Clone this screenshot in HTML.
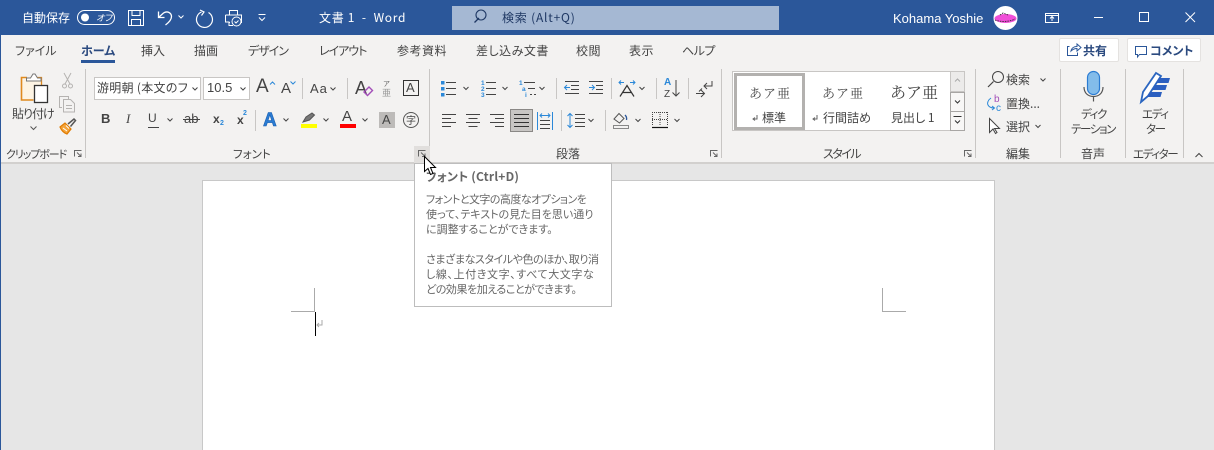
<!DOCTYPE html>
<html lang="ja"><head><meta charset="utf-8"><title>文書 1 - Word</title>
<style>
html,body{margin:0;padding:0;width:1214px;height:450px;overflow:hidden;background:#e6e6e6}
body{position:relative;font-family:"Liberation Sans","Noto Sans CJK JP",sans-serif;font-size:12px;color:#444}
div{position:absolute;box-sizing:border-box}
.t{white-space:nowrap;line-height:16px;height:16px;font-family:"Noto Sans CJK JP","Liberation Sans",sans-serif;font-feature-settings:"palt";color:#444}
.w{color:#fff}
.s{background:#c8c6c4;width:1px}
.n{font-size:11.5px;letter-spacing:-1.400px}
svg{position:absolute;left:0;top:0}
</style></head><body>
<div style="left:0;top:0;width:1214px;height:35px;background:#2b579a"></div>
<div style="left:0;top:35px;width:1214px;height:127px;background:#f3f2f1"></div>
<div style="left:0;top:162px;width:1214px;height:2px;background:#d2d0ce"></div>
<div style="left:0;top:35px;width:1px;height:415px;background:#2b579a"></div>
<div style="left:202px;top:180px;width:793px;height:280px;background:#fff;border:1px solid #c8c8c8"></div>

<!-- title bar -->
<div class="t w" style="left:22px;top:10px">自動保存</div>
<div class="t w" style="left:96px;top:10px;font-size:9px;font-style:italic">オフ</div>
<div class="t w" style="left:319px;top:10px;letter-spacing:.7px">文書 1&nbsp; -&nbsp; Word</div>
<div style="left:452px;top:6px;width:327px;height:24px;background:#a5b8d3"></div>
<div class="t" style="left:502px;top:10px;color:#1f3864;letter-spacing:.8px">検索 (Alt+Q)</div>
<div class="t w" style="left:893px;top:11px;font-family:'Liberation Sans',sans-serif;font-size:13px">Kohama Yoshie</div>

<!-- tabs -->
<div class="t" style="left:15px;top:43px">ファイル</div>
<div class="t" style="left:81px;top:43px;font-weight:700;color:#2b4a7f">ホーム</div>
<div style="left:81px;top:60px;width:34px;height:3px;background:#2b579a"></div>
<div class="t" style="left:141px;top:43px">挿入</div>
<div class="t" style="left:194px;top:43px">描画</div>
<div class="t" style="left:248px;top:43px;letter-spacing:-1px">デザイン</div>
<div class="t" style="left:319px;top:43px;letter-spacing:-1px">レイアウト</div>
<div class="t" style="left:397px;top:43px;letter-spacing:.5px">参考資料</div>
<div class="t" style="left:476px;top:43px;letter-spacing:.5px">差し込み文書</div>
<div class="t" style="left:576px;top:43px;letter-spacing:.5px">校閲</div>
<div class="t" style="left:629px;top:43px;letter-spacing:.5px">表示</div>
<div class="t" style="left:682px;top:43px;letter-spacing:-.5px">ヘルプ</div>
<div style="left:1059px;top:38px;width:60px;height:24px;background:#fff;border:1px solid #e4e2e0;border-radius:2px"></div>
<div style="left:1127px;top:38px;width:74px;height:24px;background:#fff;border:1px solid #e4e2e0;border-radius:2px"></div>
<div class="t" style="left:1083px;top:43px;font-weight:700;color:#2b4a7f">共有</div>
<div class="t" style="left:1150px;top:43px;font-weight:700;color:#2b4a7f">コメント</div>

<!-- separators -->
<div class="s" style="left:85px;top:69px;height:89px"></div>
<div class="s" style="left:429px;top:69px;height:77px"></div>
<div class="s" style="left:721px;top:69px;height:89px"></div>
<div class="s" style="left:975px;top:69px;height:89px"></div>
<div class="s" style="left:1060px;top:69px;height:89px"></div>
<div class="s" style="left:1125px;top:69px;height:89px"></div>
<div class="s" style="left:1183px;top:69px;height:89px"></div>
<div class="s" style="left:302px;top:78px;height:21px"></div>
<div class="s" style="left:347px;top:78px;height:21px"></div>
<div class="s" style="left:255px;top:110px;height:21px"></div>
<div class="s" style="left:556px;top:78px;height:21px"></div>
<div class="s" style="left:611px;top:78px;height:21px"></div>
<div class="s" style="left:656px;top:78px;height:21px"></div>
<div class="s" style="left:688px;top:78px;height:21px"></div>
<div class="s" style="left:561px;top:110px;height:21px"></div>
<div class="s" style="left:605px;top:110px;height:21px"></div>

<!-- clipboard -->
<div class="t" style="left:12px;top:106px;letter-spacing:-1px">貼り付け</div>
<div class="t" style="left:6px;top:146px;font-size:11px;letter-spacing:-1.100px">クリップボード</div>

<!-- font -->
<div style="left:94px;top:77px;width:107px;height:23px;background:#fff;border:1px solid #c8c6c4"></div>
<div style="left:203px;top:77px;width:47px;height:23px;background:#fff;border:1px solid #c8c6c4"></div>
<div class="t" style="left:97px;top:80px;width:90px;overflow:hidden;letter-spacing:.3px">游明朝 (本文のフォント</div>
<div class="t" style="left:207px;top:80px;font-family:'Liberation Sans';font-size:13px">10.5</div>
<div class="t" style="left:256px;top:79px;font-family:'Liberation Sans';font-size:19px">A</div>
<div class="t" style="left:281px;top:81px;font-family:'Liberation Sans';font-size:15px">A</div>
<div class="t" style="left:310px;top:81px;font-family:'Liberation Sans';font-size:13px;letter-spacing:1px">Aa</div>
<div class="t" style="left:355px;top:80px;font-family:'Liberation Sans';font-size:18px">A</div>
<div class="t" style="left:406px;top:80px;font-family:'Liberation Sans';font-size:13px">A</div>
<div class="t" style="left:101px;top:111px;font-family:'Liberation Sans';font-weight:700;font-size:13px">B</div>
<div class="t" style="left:126px;top:111px;font-family:'Liberation Serif';font-style:italic;font-size:13px">I</div>
<div class="t" style="left:148px;top:110px;font-family:'Liberation Sans';font-size:12px">U</div>
<div class="t" style="left:184px;top:111px;font-family:'Liberation Sans';font-size:13px">ab</div>
<div class="t" style="left:213px;top:111px;font-family:'Liberation Sans';font-weight:700;font-size:12px">x</div>
<div class="t" style="left:220px;top:116px;font-family:'Liberation Sans';font-weight:700;font-size:7px;color:#2b88d8">2</div>
<div class="t" style="left:237px;top:112px;font-family:'Liberation Sans';font-weight:700;font-size:12px">x</div>
<div class="t" style="left:243px;top:106px;font-family:'Liberation Sans';font-weight:700;font-size:7px;color:#2b88d8">2</div>
<div style="left:379px;top:112px;width:16px;height:16px;background:#bdbbb9"></div>
<div class="t" style="left:342px;top:109px;font-family:'Liberation Sans';font-size:15px">A</div>
<div class="t" style="left:382px;top:112px;font-family:'Liberation Sans';font-size:13px">A</div>
<div class="t" style="left:406px;top:112px;font-size:10px">字</div>
<div class="t" style="left:233px;top:146px;font-size:11.5px">フォント</div>

<!-- paragraph -->
<div style="left:510px;top:109px;width:23px;height:23px;background:#c8c6c4;border:1px solid #8a8886"></div>
<div class="t" style="left:556px;top:146px">段落</div>

<!-- styles -->
<div style="left:732px;top:71px;width:219px;height:60px;background:#fff;border:1px solid #c8c6c4"></div>
<div style="left:734px;top:73px;width:71px;height:57px;background:#fff;border:3px solid #b3b1af"></div>
<div class="t" style="left:749px;top:85px;font-family:'Noto Serif CJK SC','Noto Sans CJK JP',serif;font-feature-settings:normal;font-size:13px;letter-spacing:1px">あア亜</div>
<div class="t" style="left:822px;top:85px;font-family:'Noto Serif CJK SC','Noto Sans CJK JP',serif;font-feature-settings:normal;font-size:13px;letter-spacing:1px">あア亜</div>
<div class="t" style="left:890px;top:84px;font-family:'Noto Serif CJK SC','Noto Sans CJK JP',serif;font-feature-settings:normal;font-size:16px">あア亜</div>
<div class="t" style="left:762px;top:110px">標準</div>
<div class="t" style="left:823px;top:110px">行間詰め</div>
<div class="t" style="left:891px;top:110px">見出し 1</div>
<div style="left:950px;top:71px;width:15px;height:21px;background:#ecebea;border:1px solid #c8c6c4"></div>
<div style="left:950px;top:92px;width:15px;height:20px;background:#f8f7f6;border:1px solid #a8a6a4"></div>
<div style="left:950px;top:111px;width:15px;height:20px;background:#f8f7f6;border:1px solid #a8a6a4"></div>
<div class="t" style="left:823px;top:146px;letter-spacing:-1.500px">スタイル</div>

<!-- editing -->
<div class="t" style="left:1006px;top:72px">検索</div>
<div class="t" style="left:1006px;top:96px">置換...</div>
<div class="t" style="left:1006px;top:119px">選択</div>
<div class="t" style="left:1006px;top:146px">編集</div>
<div class="t n" style="left:1081px;top:106px">ディク</div>
<div class="t n" style="left:1071px;top:121px">テーション</div>
<div class="t" style="left:1081px;top:146px">音声</div>
<div class="t n" style="left:1142px;top:106px">エディ</div>
<div class="t n" style="left:1146px;top:121px">ター</div>
<div class="t n" style="left:1133px;top:146px">エディター</div>
<div style="left:414px;top:146px;width:16px;height:17px;background:#e1dfdd"></div>

<svg width="1214" height="450" viewBox="0 0 1214 450" fill="none">
<!-- title bar icons -->
<g stroke="#fff" stroke-width="1">
<rect x="77.5" y="10.5" width="37" height="14" rx="7"/>
<path d="M128.5 10.5h15v15h-15zM132 10.5v5h8v-5M131.500 25.500v-6h9v6"/>
<path d="M158.500 11.500v6h6M158.500 17.500l5-4.500c4-2.500 8 0 8 3.500 0 3-2 5.500-6 8.500" stroke-width="1.300"/>
<path d="M178.500 15.500l2.500 2.500 2.500-2.500"/>
<path d="M208.500 12.500a8 8 0 1 1-7-.5M200 10l4 2-2.500 3.500" stroke-width="1.200"/>
<path d="M229.500 15v-4.500h8v4.500M225.500 15h16v8M225.500 15v7h4M230 22.500h-1v3h4"/>
<circle cx="236.500" cy="21.500" r="4.500" /><path d="M234.500 21.500l1.500 1.500 2.500-2.500"/>
<path d="M258.500 14.500h7M259 17.500l3 3 3-3"/>
<rect x="1045.500" y="13.500" width="13" height="9"/><path d="M1045.500 15.500h13M1052 21v-4M1050 18.500l2-2 2 2"/>
<path d="M1094 17.500h9"/><rect x="1139.500" y="12.500" width="9" height="9"/>
<path d="M1185.500 12.500l9.500 9.500M1195 12.500l-9.500 9.500"/>
</g>
<circle cx="85" cy="17.500" r="4" fill="#fff"/>
<path d="M474.500 22.500l4.500-4.500" stroke="#1f3864" stroke-width="1.300"/><circle cx="481" cy="15" r="5" stroke="#1f3864" stroke-width="1.100"/>
<circle cx="1005.500" cy="18" r="12" fill="#fff"/>
<ellipse cx="1005.500" cy="18.500" rx="11" ry="4.500" fill="#f04fd8"/>
<path d="M995 20c5 2 15 2 20-1M1000 15l3-2 5 2" stroke="#222" stroke-width=".8" stroke-dasharray="1.500 1"/>
<!-- share / comment -->
<path d="M1069.500 46.500h-2v9h10v-3M1071 51c.5-3 3-4.500 6-4.500v-2.500l4 3.500-4 3.500v-2.500c-3 0-4.500 1-6 2.500z" stroke="#2b579a"/>
<path d="M1135.500 46.500h11v8h-7l-2 2.500v-2.500h-2z" stroke="#2b579a"/>
<!-- clipboard -->
<path d="M21.500 77.500h20v22h-20z" fill="#fdf4e4"/>
<path d="M27 77.500h-5.500v22.500h12" stroke="#e08a1e" stroke-width="1.600"/><path d="M36 77.500h5.500v8" stroke="#e08a1e" stroke-width="1.300"/>
<path d="M26.500 81v-3h4l2.500-4h2l2.500 4h3.500v3z" fill="#fff" stroke="#777"/>
<rect x="34.500" y="85.500" width="13" height="17" fill="#fff" stroke="#333" stroke-width="1.300"/>
<path d="M30.500 126.500l3 3 3-3" stroke="#555"/>
<g stroke="#b5b3b1"><path d="M64 73l6 11M71 73l-6 11"/><circle cx="64.500" cy="86" r="2"/><circle cx="70.500" cy="86" r="2"/>
<path d="M62 107.500h-2.500v-11h9v3M63.500 99.500h7l4 4v8.500h-11zM66 105.500h6M66 108.500h6"/></g>
<path d="M60 127l5-4 6 6-4 5c-3-1-5.500-3.500-7-7z" fill="#f4a43a" stroke="#e07b00" stroke-width="1.200"/><path d="M63 128l4 3M66 125.500l3 3" stroke="#fff"/>
<path d="M68 124l6-5 1.500 1.500-5 6" stroke="#555" stroke-width="1.500"/>
<!-- launchers -->
<g stroke="#666"><path d="M74.500 156.500v-6h7"/><path d="M77 152.500l4 4M81 153.500v3h-3"/>
<path d="M418.500 156.500v-6h7"/><path d="M421 152.500l4 4M425 153.500v3h-3"/>
<path d="M710.500 156.500v-6h7"/><path d="M713 152.500l4 4M717 153.500v3h-3"/>
<path d="M964.500 156.500v-6h7"/><path d="M967 152.500l4 4M971 153.500v3h-3"/></g>
<!-- chevrons -->
<path stroke="#444" d="M192.500 87.500l2.500 2.500 2.500-2.500M240.500 87.500l2.500 2.500 2.500-2.500M330.500 87.500l2.500 2.500 2.500-2.500M167.500 118.500l2.500 2.500 2.500-2.500M283.500 118.500l2.500 2.500 2.500-2.500M323.500 118.500l2.500 2.500 2.500-2.500M362.500 118.500l2.500 2.500 2.500-2.500M463.500 87l2.500 2.500 2.500-2.500M502.500 87l2.500 2.500 2.500-2.500M539.500 87l2.500 2.500 2.500-2.500M639.500 87l2.500 2.500 2.500-2.500M588.500 119l2.500 2.500 2.500-2.500M635.500 119l2.500 2.500 2.500-2.500M674.500 119l2.500 2.500 2.500-2.500M1040.500 78.500l2.500 2.500 2.500-2.500M1035.500 125l2.500 2.500 2.500-2.500M1195.500 157l3.500-3.500 3.500 3.500"/>
<path stroke="#aaa" d="M955 81.500l2.500-2.500 2.500 2.500"/>
<path stroke="#333" d="M955 100.500l2.500 2.500 2.500-2.500M953.500 116.500h8M955 120.500l2.500 2.500 2.500-2.500"/>
<!-- font size arrows -->
<path stroke="#2b88d8" d="M270 84.500l2.500-2.500 2.500 2.500M290.500 81.500l2.500 2.500 2.500-2.500"/>
<!-- eraser, phonetic, box, underline etc -->
<path d="M364 92l5-5 3.500 3.500-5 5z" stroke="#a24eb8" stroke-width="1.400"/>
<text x="383" y="86" font-family="Noto Sans CJK JP" font-size="7" fill="#666">ア</text>
<text x="382" y="96" font-family="Noto Sans CJK JP" font-size="9" fill="#999">亜</text>
<rect x="403.500" y="80.500" width="15" height="15" stroke="#333"/>
<path stroke="#444" d="M148 127.500h11M183 119.500h17"/>
<text x="263" y="126" font-family="Liberation Sans" font-size="19" font-weight="700" fill="#2b7cd3" stroke="#1a5fb0" stroke-width=".6">A</text>
<path d="M303 122l3-5 6-4 2.500 2-5 5z" fill="#777" stroke="#555"/>
<rect x="301" y="124" width="16" height="4" fill="#ffff00"/>
<rect x="340" y="124" width="16" height="4" fill="#f00"/>
<circle cx="411" cy="120" r="7.500" stroke="#555"/>
<!-- paragraph row 1 -->
<g fill="#2b88d8"><rect x="441" y="81" width="3.500" height="3.500"/><rect x="441" y="87" width="3.500" height="3.500"/><rect x="441" y="93" width="3.500" height="3.500"/></g>
<g font-family="Liberation Sans" font-weight="700" font-size="6.500" fill="#2b88d8"><text x="481" y="85">1</text><text x="481" y="91">2</text><text x="481" y="97">3</text><text x="519" y="85">1</text><text x="522" y="91">a</text><text x="525" y="97">i</text></g>
<path stroke="#444" d="M446 82.500h10M446 88.500h10M446 94.500h10M486 82.500h10M486 88.500h10M486 94.500h10M524 82.500h11M528 88.500h7M530 94.500h2M534 94.500h2M565 81.500h14M571 85.500h8M571 89.500h8M565 93.500h14M589 81.500h14M596 85.500h7M596 89.500h7M589 93.500h14"/>
<path stroke="#2b88d8" d="M570 87.500h-5M567 85l-2.500 2.500 2.500 2.500M589 87.500h5M592 85l2.500 2.500-2.500 2.500"/>
<path stroke="#2b88d8" d="M619 82.500h5M621 80.500l-2 2 2 2M635 82.500h-5M633 80.500l2 2-2 2"/>
<path stroke="#333" stroke-width="1.200" d="M620 96.500l7-11 7 11M622.500 92.500h9"/>
<text x="664" y="85" font-family="Liberation Sans" font-weight="700" font-size="10" fill="#2b88d8">A</text>
<text x="664" y="97" font-family="Liberation Sans" font-size="10" fill="#444">Z</text>
<path stroke="#444" d="M676 80v16M672.500 92.500l3.500 3.500 3.500-3.500M696 93.500h8M701 90l3.500 3.500-3.500 3.500M712 81v5h-8M707 83l-3 3 3 3M702 88.500l-3 3" />
<!-- paragraph row 2 -->
<path stroke="#444" d="M442 114.500h14M442 118.500h9M442 122.500h14M442 126.500h9M466 114.500h14M468.500 118.500h9M466 122.500h14M468.500 126.500h9M490 114.500h14M495 118.500h9M490 122.500h14M495 126.500h9"/>
<path stroke="#333" d="M514 114.500h15M514 118.500h15M514 122.500h15M514 126.500h15"/>
<path stroke="#2b88d8" d="M537.500 112v18M552.500 112v18M540 115.500h10M542 113.500l-2 2 2 2M548 113.500l2 2-2 2"/>
<path stroke="#444" d="M540 120.500h10M540 124.500h10M540 128.500h10"/>
<path stroke="#2b88d8" d="M570 114v13M567.500 116l2.500-2.500 2.500 2.500M567.500 125l2.500 2.500 2.500-2.500"/>
<path stroke="#444" d="M575 114.500h10M575 118.500h10M575 122.500h10M575 126.500h10"/>
<path stroke="#555" d="M614 119l5-5.500 5 5-4.500 4.500z"/><path stroke="#2b579a" stroke-width="1.300" d="M625 115c1.500 1.500 2 3 1.500 5"/>
<rect x="613.500" y="125.500" width="15" height="3" stroke="#888"/>
<path stroke="#444" stroke-dasharray="1 1" d="M652.500 112v14M667.500 112v14M652 112.500h16M660 112v14M652 119.500h16"/>
<path stroke="#111" stroke-width="1.200" d="M652 127.500h16"/>
<!-- return marks -->
<path stroke="#666" d="M757 115v4h-4M755 117.500l-2 1.500 2 1.500M817 115v4h-4M815 117.500l-2 1.500 2 1.500"/>
<!-- editing icons -->
<path stroke="#444" stroke-width="1.200" d="M988 87l5.500-5.500"/><circle cx="998" cy="77" r="5.500" stroke="#444"/>
<text x="994" y="102" font-family="Liberation Sans" font-size="10" fill="#a24eb8">b</text>
<text x="996" y="111" font-family="Liberation Sans" font-size="10" fill="#2b88d8">c</text>
<path stroke="#2b88d8" d="M991 98c-3 2-4 5-3 7s3 3 6 3M992 106l2.500 2-2.500 2"/>
<path stroke="#444" d="M989.500 118.500v14l3.500-3.500 2.500 4.500 1.500-1-2.500-4h5z" fill="#fff"/>
<!-- mic -->
<rect x="1087.500" y="71.500" width="12" height="23" rx="6" fill="#83bcea" stroke="#2b7cd3" stroke-width="1.200"/>
<path stroke="#555" stroke-width="1.200" d="M1084 87c0 6 4 9.500 9.500 9.500s9.500-3.500 9.500-9.500M1093.500 96.500v5"/>
<!-- editor pen -->
<path d="M1141 102l2-10 13-19 5 3-13 20z" fill="#fff" stroke="#2b66c0" stroke-width="1.800"/>
<path d="M1141 102l7-6" stroke="#2b66c0" stroke-width="1.500"/>
<path d="M1159 78h11l-1.500 5h-12.500zM1155 85h12l-1.500 5h-13.500zM1150 92h12l-1.500 5h-14z" fill="#2b5fc0"/>
</svg>

<!-- tooltip -->
<div style="left:414px;top:163px;width:198px;height:144px;background:#fff;border:1px solid #bdbdbd"></div>
<div class="t" style="left:426px;top:169px;font-weight:700;color:#666;letter-spacing:.2px">フォント (Ctrl+D)</div>
<div class="t" style="left:426px;top:191px;font-size:11px;color:#666;letter-spacing:-.55px">フォントと文字の高度なオプションを</div>
<div class="t" style="left:426px;top:206px;font-size:11px;color:#666">使って、テキストの見た目を思い通り</div>
<div class="t" style="left:426px;top:221px;font-size:11px;color:#666">に調整することができます。</div>
<div class="t" style="left:426px;top:251px;font-size:11px;color:#666;letter-spacing:-.45px">さまざまなスタイルや色のほか、取り消</div>
<div class="t" style="left:426px;top:266px;font-size:11px;color:#666;letter-spacing:.6px">し線、上付き文字、すべて大文字な</div>
<div class="t" style="left:426px;top:281px;font-size:11px;color:#666;letter-spacing:-.45px">どの効果を加えることができます。</div>

<svg width="1214" height="450" viewBox="0 0 1214 450" fill="none">
<path stroke="#aaa" d="M314.500 288v23.500H291M882.500 288v23.500H906"/>
<path stroke="#000" d="M315.500 312v24"/>
<path stroke="#aaa" d="M322 320v5h-5M319 323l-2 2 2 2"/>
<path d="M424.500 156.500v15l3.500-3 2.500 6 2.500-1-2.500-6h5z" fill="#fff" stroke="#000"/>
</svg>
</body></html>
